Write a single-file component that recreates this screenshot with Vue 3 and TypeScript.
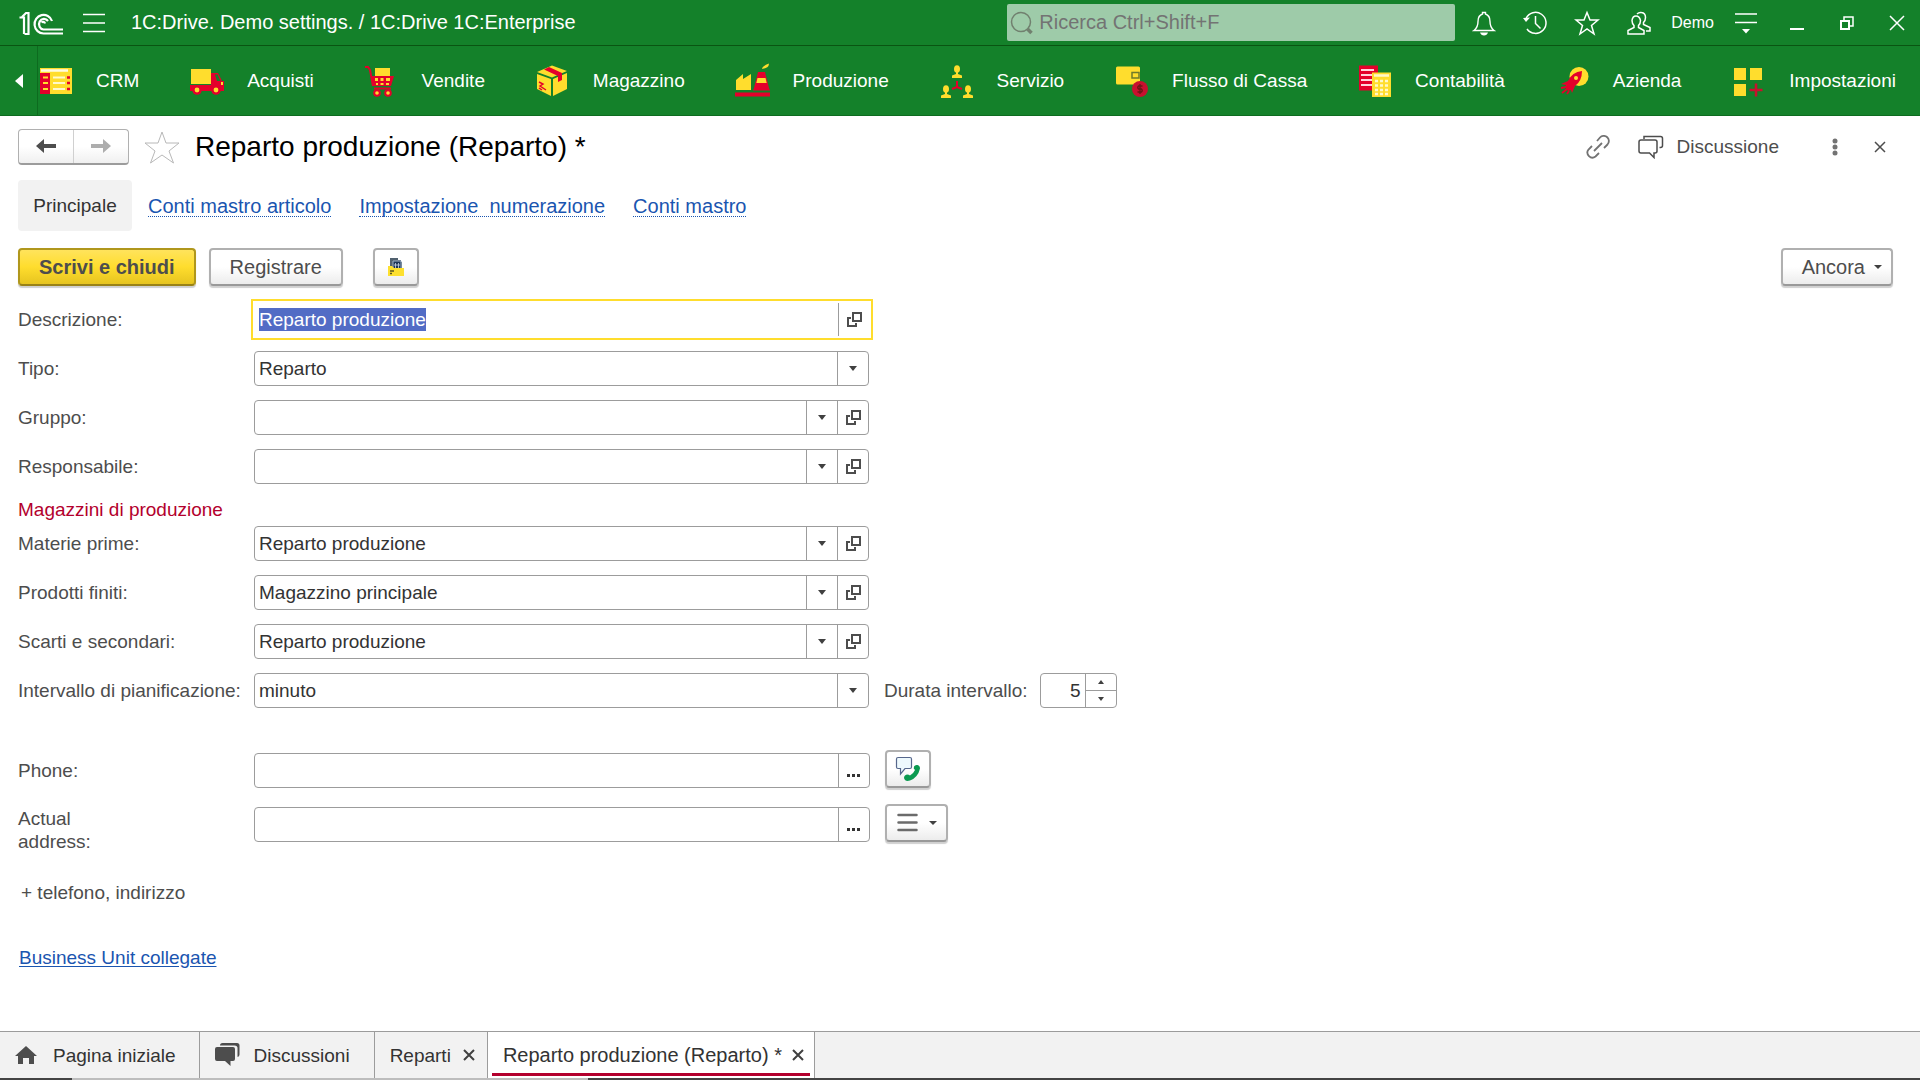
<script setup lang="ts">
import { onMounted, ref } from 'vue'

interface Section {
  name: string
  icon: string
}

interface Field {
  id: string
  label: string
  value: string
  kind: 'select' | 'lookup'
}

const yellow = '#ffdd2d'
const red = '#e4002b'
const person = (x: number, y: number) =>
  `<ellipse cx="${x}" cy="${y}" rx="3" ry="3.800" fill="${yellow}"/><path d="M${x - 1} ${y + 3}h2v2l4 1.500v2.500h-10v-2.500l4-1.500z" fill="${yellow}"/>`

const sections: Section[] = [
  {
    name: 'CRM',
    icon: `<path d="M2 7h32v26H2z" fill="${yellow}"/><path d="M2 12h10v21H2z" fill="${red}"/><path d="M3 9.500h27" stroke="#fffbe0" stroke-width="2.500"/><path d="M5 16.500h5M5 22h5M5 28h5" stroke="${yellow}" stroke-width="2"/><path d="M15 16.500h12M15 22h12M15 28h12" stroke="#fff9cc" stroke-width="2"/><path d="M29 16.500h3M29 22h3M29 28h3" stroke="${red}" stroke-width="2.500"/>`,
  },
  {
    name: 'Acquisti',
    icon: `<path d="M2 8h20v15H2z" fill="${yellow}"/><path d="M1 24h21V12h7l4 8h2v10H1z" fill="${red}"/><path d="M26 13.500h2.500l3 6.500H28z" fill="#14812a"/><circle cx="8" cy="29" r="4.800" fill="${red}"/><circle cx="27" cy="29" r="4.800" fill="${red}"/><circle cx="8" cy="29" r="2.400" fill="${yellow}"/><circle cx="27" cy="29" r="2.400" fill="${yellow}"/><path d="M33 21v3" stroke="${yellow}" stroke-width="2"/>`,
  },
  {
    name: 'Vendite',
    icon: `<path d="M11 7h15v9H11z" fill="${yellow}"/><path d="M1 6h3l2 3 3 16" fill="none" stroke="${red}" stroke-width="2"/><path d="M7 15h23l-3 10H9z" fill="${red}"/><path d="M11 17h3v3h-3zm5.500 0h3v3h-3zm5.500 0h4v3h-4zM12 22h2v2h-2zm4.500 0h3v2h-3zm5.500 0h3v2h-3z" fill="${yellow}"/><path d="M10 27.500h17" stroke="${red}" stroke-width="2"/><circle cx="13" cy="32" r="3.800" fill="${red}"/><circle cx="24" cy="32" r="3.800" fill="${red}"/><circle cx="13" cy="32" r="1.800" fill="${yellow}"/><circle cx="24" cy="32" r="1.800" fill="${yellow}"/>`,
  },
  {
    name: 'Magazzino',
    icon: `<path d="M2 13l14 5v17L2 28zM18 18l14-6v16l-14 7z" fill="${yellow}"/><path d="M2 11L17 4.500 32 10l-15 6.500z" fill="${yellow}"/><path d="M9 8.500l5-2.500 13 6v7l-4 2v-6z" fill="${red}"/><path d="M4 21l4 2-3 2 6 4m-7-2l3 2" fill="none" stroke="${red}" stroke-width="1.500"/>`,
  },
  {
    name: 'Produzione',
    icon: `<path d="M1 29V19l7-6v5l8-5v16z" fill="${yellow}"/><path d="M23 11h7l4 16 1 2.500H18l1-2.500z" fill="${red}"/><path d="M22.500 17h8l1.200 5H21.300z" fill="${yellow}"/><path d="M27 8q0-3 7-5.500Q34 7 27 8z" fill="${yellow}"/><path d="M0 33.500h35" stroke="${red}" stroke-width="4"/>`,
  },
  {
    name: 'Servizio',
    icon: `${person(18, 8)}${person(7, 28)}${person(29, 28)}<path d="M18 20v6l-5 2m5-2l5 2" fill="none" stroke="${red}" stroke-width="2"/>`,
  },
  {
    name: 'Flusso di Cassa',
    icon: `<rect x="2" y="5.500" width="24" height="18" rx="1.500" fill="${yellow}"/><path d="M18 11.500h7v5.500h-7z" fill="${yellow}" stroke="#6f7a2a" stroke-width="1.500"/><ellipse cx="26" cy="28" rx="8" ry="8" fill="#c8102e"/><path d="M28.500 25h-4q-1.500 1.500 0 3h3q1.500 1.500 0 3h-4M26 23v10" fill="none" stroke="#6b1515" stroke-width="1.300"/>`,
  },
  {
    name: 'Contabilità',
    icon: `<path d="M2 4.500h19v25H2z" fill="${red}"/><path d="M4 9h13M4 14h11M4 19h11M4 24h11" stroke="#ffd5dc" stroke-width="2"/><path d="M15 11.500h19V36H15z" fill="${yellow}"/><path d="M17 14.500h15" stroke="#fff8c8" stroke-width="2.500"/><path d="M18 20h13M18 24.500h13M18 29h13M18 33h13" stroke="#fff8c8" stroke-width="2.500" stroke-dasharray="3 2"/>`,
  },
  {
    name: 'Azienda',
    icon: `<circle cx="24" cy="15.500" r="9.500" fill="${yellow}"/><path d="M27 10q-10 1-14 10l-7 3 5 1-1 2 3 4 3-1 1 3 3-7q7-5 7-15z" fill="${red}"/><circle cx="21" cy="17" r="2" fill="${yellow}"/><path d="M11 26l-5 1m6 1l-5 4m7-2l-2 3" stroke="${red}" stroke-width="1.800"/>`,
  },
  {
    name: 'Impostazioni',
    icon: `<path d="M3 7h12v12H3zM19 7h12v12H19zM3 23h12v12H3z" fill="${yellow}"/><path d="M25 22.500v13M18.500 29h13" stroke="#c8102e" stroke-width="2.500"/>`,
  },
]

const mainFields: Field[] = [
  { id: 'tipo', label: 'Tipo:', value: 'Reparto', kind: 'select' },
  { id: 'gruppo', label: 'Gruppo:', value: '', kind: 'lookup' },
  { id: 'responsabile', label: 'Responsabile:', value: '', kind: 'lookup' },
]

const stockFields: Field[] = [
  { id: 'materie', label: 'Materie prime:', value: 'Reparto produzione', kind: 'lookup' },
  { id: 'prodotti', label: 'Prodotti finiti:', value: 'Magazzino principale', kind: 'lookup' },
  { id: 'scarti', label: 'Scarti e secondari:', value: 'Reparto produzione', kind: 'lookup' },
]

const description = ref<HTMLInputElement | null>(null)

onMounted(() => {
  description.value?.focus()
  description.value?.select()
})
</script>

<template>
  <div class="page">
    <header class="titlebar">
      <svg class="logo" width="46" height="24" viewBox="18 10 46 24" fill="none" stroke="#fff" stroke-width="2.200">
        <path d="M19.500 16.500h4.500V33M22 16l4-4h2.500v21h-4" />
        <path d="M52 20a9 9.300 0 1 0-8.500 12.500H63" />
        <path d="M48 20a5 5.300 0 1 0-4.500 8.500H63" />
        <path d="M45 22.500a2 2 0 0 0-3.500-1" />
      </svg>
      <button class="plain" aria-label="Menu">
        <svg width="22" height="20" viewBox="0 0 22 20" stroke="#fff" stroke-width="1.500"><path d="M0 1.500h22M0 10h22M0 18.500h22" /></svg>
      </button>
      <div class="app-title">1C:Drive. Demo settings. / 1C:Drive 1C:Enterprise</div>
      <div class="search">
        <svg width="24" height="24" viewBox="0 0 24 24" fill="none" stroke="#71806f"><ellipse cx="11" cy="11" rx="9.500" ry="9.500" stroke-width="1.500" /><path d="M17.500 18l4 4" stroke-width="3.500" /></svg>
        <input type="text" aria-label="Ricerca" placeholder="Ricerca Ctrl+Shift+F" />
      </div>
      <div class="tools">
        <button class="plain" aria-label="Notifiche">
          <svg width="24" height="26" viewBox="0 0 24 26" fill="none" stroke="#fff" stroke-width="1.400"><path d="M2 20.500q4-3 4-9 0-6 4.500-7.500V2.500h3V4Q18 5.500 18 11.500q0 6 4 9z" /><path d="M8 22.500h8q-1 3-4 3t-4-3z" fill="#fff" stroke="none" /></svg>
        </button>
        <button class="plain" aria-label="Cronologia">
          <svg width="26" height="26" viewBox="0 0 26 26" fill="none" stroke="#fff" stroke-width="1.500"><path d="M4 8.500A10.500 10.500 0 1 1 5 19" /><path d="M13.500 6v7.500l5 5" /><path d="M1 8l7-.5-4 4.500z" fill="#fff" stroke="none" /></svg>
        </button>
        <button class="plain" aria-label="Preferiti">
          <svg width="26" height="26" viewBox="0 0 26 26" fill="none" stroke="#fff" stroke-width="1.500"><path d="M13 2.500l3 7.500h8l-6.500 5.500 2.500 8.500-7-5-7 5 2.500-8.500L2 10h8z" /></svg>
        </button>
        <button class="plain" aria-label="Utenti">
          <svg width="26" height="26" viewBox="0 0 26 26" fill="none" stroke="#fff" stroke-width="1.500"><path d="M2 24v-3.500l6-3v-2q-2-2-2-5Q6.500 6 10 6t4.500 4.500q0 3-2 5v2l5.500 3V24z" /><path d="M11 4q2-2 4.500-1.500 4 .5 4 5 0 3-2 5v2l6.500 3V21h-4" /></svg>
        </button>
      </div>
      <a class="user" href="#">Demo</a>
      <div class="window">
        <button class="plain" aria-label="Opzioni">
          <svg width="22" height="22" viewBox="0 0 22 22" stroke="#fff" stroke-width="1.500"><path d="M0 2h22M0 10.500h22" /><path d="M7 17h8l-4 4.500z" fill="#fff" stroke="none" /></svg>
        </button>
        <button class="plain" aria-label="Riduci a icona">
          <svg width="16" height="16" viewBox="0 0 16 16"><path d="M1 13h14v2H1z" fill="#fff" /></svg>
        </button>
        <button class="plain" aria-label="Ripristina">
          <svg width="16" height="16" viewBox="0 0 16 16" fill="none" stroke="#fff"><path d="M2 6h8v8H2z" stroke-width="2" /><path d="M5 5V2h9v9h-3" stroke-width="1.500" /></svg>
        </button>
        <button class="plain" aria-label="Chiudi">
          <svg width="16" height="16" viewBox="0 0 16 16" stroke="#fff" stroke-width="1.500"><path d="M1 1l14 14M15 1L1 15" /></svg>
        </button>
      </div>
    </header>

    <nav class="sections">
      <button class="plain scroll" aria-label="Indietro">
        <svg width="8" height="14" viewBox="0 0 8 14"><path d="M8 0v14L0 7z" fill="#fff" /></svg>
      </button>
      <div class="section-list">
        <a v-for="s in sections" :key="s.name" href="#" class="section">
          <svg width="36" height="40" viewBox="0 0 36 40" v-html="s.icon" />
          <span>{{ s.name }}</span>
        </a>
      </div>
    </nav>

    <main class="content">
      <div class="heading">
        <div class="history">
          <button aria-label="Indietro">
            <svg width="22" height="18" viewBox="0 0 22 18" fill="#4d4d4d"><path d="M1 9l8-7v5h12v4H9v5z" /></svg>
          </button>
          <button aria-label="Avanti">
            <svg width="22" height="18" viewBox="0 0 22 18" fill="#adadad"><path d="M21 9l-8-7v5H1v4h12v5z" /></svg>
          </button>
        </div>
        <button class="plain" aria-label="Aggiungi ai preferiti">
          <svg width="36" height="34" viewBox="0 0 36 34" fill="none" stroke="#b8b8b8"><path d="M18 2l4 11h13l-10 8 4.500 12L18 25 6.500 33 11 21 1 13h13z" /></svg>
        </button>
        <h1>Reparto produzione (Reparto) *</h1>
        <div class="heading-tools">
          <button class="plain" aria-label="Collegamento">
            <svg width="24" height="24" viewBox="0 0 24 24" fill="none" stroke="#737373" stroke-width="1.800"><path d="M8 16l8-8M11 6l3-3.500a5 5 0 0 1 7.500 7L18 13M6 11l-3.500 3.500a5 5 0 0 0 7 7L13 18" /></svg>
          </button>
          <button class="plain talk">
            <svg width="26" height="24" viewBox="0 0 26 24" fill="none" stroke="#4d4d4d" stroke-width="1.500"><path d="M3 5h14q2 0 2 2v9q0 2-2 2h-1v4.500L11.500 18H3q-2 0-2-2V7q0-2 2-2z" /><path d="M6 4V1.500h16.500q2 0 2 2v7q0 2-2 2h-1" /></svg>
            <span>Discussione</span>
          </button>
          <button class="plain" aria-label="Altre azioni">
            <svg width="6" height="18" viewBox="0 0 6 18" fill="#737373"><circle cx="3" cy="3" r="2.500" /><circle cx="3" cy="9" r="2.500" /><circle cx="3" cy="15" r="2.500" /></svg>
          </button>
          <button class="plain" aria-label="Chiudi scheda">
            <svg width="12" height="12" viewBox="0 0 12 12" stroke="#4d4d4d" stroke-width="1.500"><path d="M1 1l10 10M11 1L1 11" /></svg>
          </button>
        </div>
      </div>

      <nav class="subnav">
        <span class="current">Principale</span>
        <a href="#">Conti mastro articolo</a>
        <a href="#">Impostazione&nbsp; numerazione</a>
        <a href="#">Conti mastro</a>
      </nav>

      <div class="commands">
        <button class="btn primary">Scrivi e chiudi</button>
        <button class="btn">Registrare</button>
        <button class="btn square" aria-label="Proprietà">
          <svg width="18" height="20" viewBox="0 0 18 20"><path d="M3 1h8v2h3v2h1v6H3z" fill="#51616f" /><path d="M6 4h8v8H6z" fill="#1d3557" stroke="#9fb3c8" /><path d="M8.500 6v5M11.500 6v5M7 8h6" stroke="#c9d6e4" stroke-width=".8" /><path d="M1 9h4l2 2h10v8H1z" fill="#fde02f" /><path d="M3 14h4M3 16.500h2" stroke="#5b5520" stroke-width="1.500" /></svg>
        </button>
        <button class="btn more">Ancora
          <svg width="8" height="4" viewBox="0 0 8 4"><path d="M0 0h8L4 4z" fill="#404040" /></svg>
        </button>
      </div>

      <form class="form" @submit.prevent>
        <div class="row">
          <label for="descrizione">Descrizione:</label>
          <div class="control focused">
            <input id="descrizione" ref="description" type="text" value="Reparto produzione" />
            <button type="button" class="cell" aria-label="Apri">
              <svg width="15" height="15" viewBox="0 0 15 15" fill="none" stroke="#4d4d4d" stroke-width="2"><path d="M6 1h8v8H6zM4 6H1v8h8v-3" /></svg>
            </button>
          </div>
        </div>

        <template v-for="(group, g) in [mainFields, stockFields]" :key="g">
          <h2 v-if="g === 1">Magazzini di produzione</h2>
          <div v-for="f in group" :key="f.id" class="row">
            <label :for="f.id">{{ f.label }}</label>
            <div class="control">
              <select v-if="f.kind === 'select'" :id="f.id"><option>{{ f.value }}</option></select>
              <input v-else :id="f.id" type="text" :value="f.value" />
              <span v-if="f.kind === 'select'" class="cell">
                <svg width="8" height="5" viewBox="0 0 8 5"><path d="M0 0h8L4 5z" fill="#404040" /></svg>
              </span>
              <button v-else type="button" class="cell" aria-label="Scegli">
                <svg width="8" height="5" viewBox="0 0 8 5"><path d="M0 0h8L4 5z" fill="#404040" /></svg>
              </button>
              <button v-if="f.kind === 'lookup'" type="button" class="cell" aria-label="Apri">
                <svg width="15" height="15" viewBox="0 0 15 15" fill="none" stroke="#4d4d4d" stroke-width="2"><path d="M6 1h8v8H6zM4 6H1v8h8v-3" /></svg>
              </button>
            </div>
          </div>
        </template>

        <div class="row">
          <label for="intervallo">Intervallo di pianificazione:</label>
          <div class="control">
            <select id="intervallo"><option>minuto</option></select>
            <span class="cell"><svg width="8" height="5" viewBox="0 0 8 5"><path d="M0 0h8L4 5z" fill="#404040" /></svg></span>
          </div>
          <label for="durata" class="inline">Durata intervallo:</label>
          <div class="control number">
            <input id="durata" type="text" inputmode="numeric" value="5" />
            <div class="spin">
              <button type="button" aria-label="Aumenta"><svg width="6" height="4" viewBox="0 0 6 4"><path d="M0 4h6L3 0z" fill="#404040" /></svg></button>
              <button type="button" aria-label="Diminuisci"><svg width="6" height="4" viewBox="0 0 6 4"><path d="M0 0h6L3 4z" fill="#404040" /></svg></button>
            </div>
          </div>
        </div>

        <div class="contacts">
          <div class="row">
            <label for="phone">Phone:</label>
            <div class="control">
              <input id="phone" type="text" />
              <button type="button" class="cell" aria-label="Modifica telefono"><svg width="14" height="12" viewBox="0 0 14 12"><path d="M0 9h3v3H0zM5 9h3v3H5zM10 9h3v3h-3z" fill="#333" /></svg></button>
            </div>
            <button type="button" class="btn square" aria-label="Chiama">
              <svg width="26" height="26" viewBox="0 0 26 26"><path d="M3 1.500h12q1.500 0 1.500 1.500v8q0 1.500-1.500 1.500h-5L5.500 18v-5.500H3q-1.500 0-1.500-1.500V3q0-1.500 1.500-1.500z" fill="#eef9fd" stroke="#56678c" stroke-width="1.200" /><path d="M9 22q0-3 3-3.500 2 0 3 1 3.500-2 5-5.500-2-1.500-1-3.500 1-2 3.500-1.500 2.500.5 2.500 3.500-2 9-10 12-5 1.500-6-2.500z" fill="#0b9a50" /></svg>
            </button>
          </div>
          <div class="row">
            <label for="address" class="narrow">Actual address:</label>
            <div class="control">
              <input id="address" type="text" />
              <button type="button" class="cell" aria-label="Modifica indirizzo"><svg width="14" height="12" viewBox="0 0 14 12"><path d="M0 9h3v3H0zM5 9h3v3H5zM10 9h3v3h-3z" fill="#333" /></svg></button>
            </div>
            <button type="button" class="btn list" aria-label="Azioni indirizzo">
              <svg width="21" height="20" viewBox="0 0 21 20" stroke="#6b6b6b" stroke-width="2.500" stroke-linecap="round"><path d="M1.500 2h18M1.500 9.500h18M1.500 17h18" /></svg>
              <svg width="8" height="4" viewBox="0 0 8 4"><path d="M0 0h8L4 4z" fill="#404040" /></svg>
            </button>
          </div>
        </div>

        <button type="button" class="plain add">+ telefono, indirizzo</button>
        <a href="#" class="related">Business Unit collegate</a>
      </form>
    </main>

    <footer class="tabs">
      <button class="tab home">
        <svg width="22" height="20" viewBox="0 0 22 20"><path d="M11 1l11 10h-3v8h-5v-6H8v6H3v-8H0z" fill="#4d4d4d" /></svg>
        Pagina iniziale
      </button>
      <button class="tab talks">
        <svg width="26" height="26" viewBox="0 0 26 26" fill="#4d4d4d"><path d="M3 5h16q2 0 2 2v10q0 2-2 2h-2.500v5L11 19H3q-2 0-2-2V7q0-2 2-2z" /><path d="M6 3.500Q6 1 8.500 1H23q2.500 0 2.500 2.500v9q0 2-2 2.500V6q0-2.500-3-2.500z" /></svg>
        Discussioni
      </button>
      <button class="tab list-tab">
        Reparti
        <svg width="12" height="12" viewBox="0 0 12 12" stroke="#404040" stroke-width="2"><path d="M1 1l10 10M11 1L1 11" /></svg>
      </button>
      <button class="tab active">
        Reparto produzione (Reparto) *
        <svg width="12" height="12" viewBox="0 0 12 12" stroke="#404040" stroke-width="2"><path d="M1 1l10 10M11 1L1 11" /></svg>
      </button>
    </footer>
    <div class="edge"></div>
  </div>
</template>

<style>
body {
  margin: 0;
  background: #fff;
}
</style>

<style scoped>
.page {
  display: flex;
  flex-direction: column;
  min-height: 100vh;
  box-sizing: border-box;
  font-family: "Liberation Sans", Arial, sans-serif;
  font-size: 19px;
  line-height: 23px;
  color: #4d4d4d;
}

.page *,
.page *::before {
  box-sizing: border-box;
}

button,
input,
select {
  margin: 0;
  padding: 0;
  font: inherit;
  color: inherit;
}

svg {
  display: block;
  flex: none;
}

.plain {
  display: flex;
  align-items: center;
  justify-content: center;
  border: 0;
  background: none;
}

.titlebar {
  display: flex;
  align-items: center;
  height: 46px;
  padding: 0 15px 0 18px;
  border-bottom: 1px solid #0a5512;
  background: #14812a;
  color: #fff;
  font-size: 20px;
}

.titlebar .logo {
  margin-right: 19px;
}

.app-title {
  flex: 1;
  margin-left: 26px;
}

.search {
  display: flex;
  align-items: center;
  width: 448px;
  height: 37px;
  padding-left: 3px;
  gap: 5px;
  border-radius: 2px;
  background: #9ecba9;
}

.search input {
  flex: 1;
  min-width: 0;
  border: 0;
  outline: 0;
  background: none;
  color: #737373;
}

.search input::placeholder {
  color: #737373;
  opacity: 1;
}

.tools {
  display: flex;
  gap: 26px;
  margin-left: 17px;
}

.user {
  margin-left: 19px;
  font-size: 16px;
  color: #fff;
  text-decoration: none;
}

.window {
  display: flex;
  align-items: center;
  gap: 34px;
  margin-left: 21px;
}

.window .plain:first-child {
  margin-right: -2px;
}

.sections {
  display: flex;
  height: 70px;
  border-bottom: 1px solid #0d6b1f;
  background: #14812a;
}

.scroll {
  width: 38px;
  border-right: 1px solid #0d6b1f;
}

.section-list {
  display: flex;
  flex: 1;
  align-items: center;
  justify-content: space-between;
  padding-right: 24px;
}

.section {
  display: flex;
  align-items: center;
  gap: 22px;
  color: #fff;
  text-decoration: none;
  white-space: nowrap;
}

.content {
  flex: 1;
  padding: 12px 27px 24px 18px;
}

.heading {
  display: flex;
  align-items: center;
  height: 37px;
}

.history {
  display: flex;
  width: 111px;
  height: 36px;
  margin-right: 15px;
  border: 1px solid #b0b0b0;
  border-bottom: 2px solid #9c9c9c;
  border-radius: 4px;
  background: linear-gradient(#fff 50%, #f0f0f0);
}

.history button {
  display: flex;
  flex: 1;
  align-items: center;
  justify-content: center;
  border: 0;
  background: none;
}

.history button + button {
  border-left: 1px solid #d0d0d0;
}

h1 {
  flex: 1;
  margin: 0 0 0 15px;
  font-size: 28px;
  line-height: 34px;
  font-weight: 400;
  color: #000;
}

.heading-tools {
  display: flex;
  align-items: center;
  padding-right: 7px;
}

.talk {
  gap: 13px;
  margin: 0 53px 0 28px;
}

.heading-tools .plain:last-child {
  margin-left: 36px;
}

.subnav {
  display: flex;
  align-items: center;
  gap: 28px;
  height: 51px;
  margin-top: 15px;
}

.current {
  width: 114px;
  margin-right: -12px;
  padding: 14px 0;
  border-radius: 4px;
  background: #f2f2f2;
  color: #333;
  text-align: center;
}

.subnav a {
  height: 22px;
  border-bottom: 1px dotted #1a55b0;
  font-size: 20px;
  line-height: 22px;
  color: #1a55b0;
  text-decoration: none;
}

.commands {
  display: flex;
  align-items: center;
  gap: 13px;
  margin-top: 17px;
  font-size: 20px;
}

.btn {
  display: flex;
  align-items: center;
  justify-content: center;
  height: 38px;
  padding: 0 19px;
  border: 2px solid #b0b0b0;
  border-bottom-color: #999;
  border-radius: 4px;
  background: linear-gradient(#fff 50%, #ececec);
  box-shadow: 0 2px 1px #d0d0d0;
}

.btn.primary {
  border-color: #b0971c;
  border-bottom-color: #998217;
  background: linear-gradient(#ffe35c, #ffdd2d 50%, #e6c420);
  font-weight: 700;
}

.btn.square {
  width: 46px;
  padding: 0;
}

.commands .square {
  margin-left: 17px;
}

.btn.more {
  gap: 9px;
  margin-left: auto;
  padding: 0 9px 0 19px;
}

.form {
  display: flex;
  flex-direction: column;
  gap: 14px;
  padding-top: 16px;
}

.row {
  display: flex;
  align-items: center;
  height: 35px;
}

.row label {
  width: 236px;
  flex: none;
}

.row .inline {
  width: auto;
  margin: 0 12px 0 15px;
}

.control {
  display: flex;
  width: 615px;
  height: 35px;
  border: 1px solid #9c9c9c;
  border-radius: 4px;
  background: #fff;
  color: #333;
}

.control input,
.control select {
  flex: 1;
  min-width: 0;
  padding: 0 4px;
  border: 0;
  outline: 0;
  background: none;
  appearance: none;
}

.control input::selection {
  background: #526cc5;
  color: #fff;
}

.cell {
  display: flex;
  align-items: center;
  justify-content: center;
  width: 31px;
  border: 0;
  border-left: 1px solid #9c9c9c;
  background: none;
}

.control.focused {
  width: 622px;
  height: 41px;
  margin-left: -3px;
  padding: 2px;
  border: 2px solid #ffdd2d;
  border-radius: 0;
}

h2 {
  margin: -2px 0 -11px;
  font-size: 19px;
  line-height: 27px;
  font-weight: 400;
  color: #b3002d;
}

.control.number {
  width: 77px;
}

.number input {
  text-align: right;
}

.spin {
  display: flex;
  flex-direction: column;
  width: 31px;
  border-left: 1px solid #9c9c9c;
}

.spin button {
  display: flex;
  flex: 1;
  align-items: center;
  justify-content: center;
  border: 0;
  background: none;
}

.spin button + button {
  border-top: 1px solid #9c9c9c;
}

.contacts {
  display: flex;
  flex-direction: column;
  gap: 19px;
  margin-top: 31px;
}

.contacts .control {
  width: 616px;
  margin-right: 15px;
}

.contacts .btn {
  margin-bottom: 4px;
}

.row .narrow {
  width: 90px;
  margin: 10px 146px 0 0;
}

.btn.list {
  gap: 11px;
  width: 63px;
  padding: 0;
}

.add {
  align-self: flex-start;
  margin: 25px 0 0 3px;
}

.related {
  align-self: flex-start;
  margin: 28px 0 0 1px;
  color: #1a55b0;
  text-underline-offset: 2px;
}

.tabs {
  display: flex;
  height: 47px;
  border-top: 1px solid #9c9c9c;
  background: #f2f2f2;
}

.tab {
  position: relative;
  display: flex;
  align-items: center;
  padding: 0 15px;
  border: 0;
  border-right: 1px solid #9c9c9c;
  background: none;
  color: #333;
  white-space: nowrap;
}

.tab.home {
  gap: 16px;
  padding: 0 23px 0 15px;
}

.tab.talks {
  gap: 14px;
  padding: 0 24px 0 14px;
}

.tab.list-tab {
  gap: 12px;
  padding-right: 12px;
}

.tab.active {
  gap: 10px;
  padding-right: 10px;
  background: #fff;
  font-size: 20px;
}

.tab.active::before {
  content: "";
  position: absolute;
  right: 4px;
  bottom: 2px;
  left: 4px;
  height: 3px;
  background: #b3002d;
}

.edge {
  height: 2px;
  background: linear-gradient(to right, #444 72px, #bdbdbd 72px, #bdbdbd 588px, #444 588px);
}
</style>
